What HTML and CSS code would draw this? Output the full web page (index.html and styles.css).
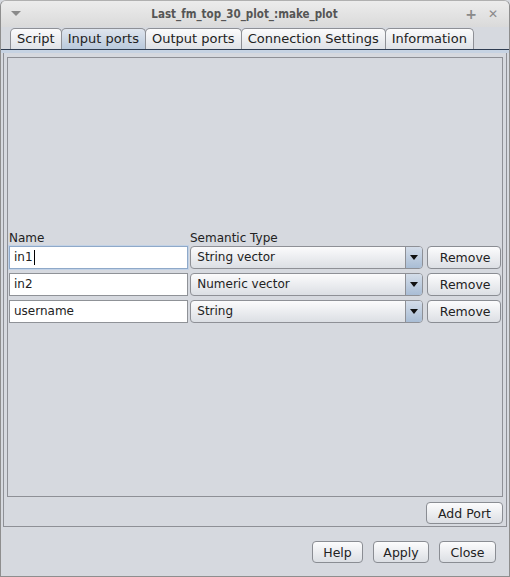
FILE: index.html
```html
<!DOCTYPE html>
<html>
<head>
<meta charset="utf-8">
<link rel="stylesheet" href="styles.css">
</head>
<body>
<div class="window">
  <div class="titlebar">
    <span class="menu-arrow"></span>
    <span class="title">Last_fm_top_30_plot_:make_plot</span>
    <span class="tb-btns"><span class="tb-plus">+</span><span class="tb-close">✕</span></span>
  </div>
  <div class="tabs">
    <div class="tab">Script</div>
    <div class="tab selected">Input ports</div>
    <div class="tab">Output ports</div>
    <div class="tab">Connection Settings</div>
    <div class="tab">Information</div>
  </div>
  <div class="tabline"></div>
  <div class="content">
    <div class="inner">
      <div class="form">
        <div class="labels">
          <span class="lbl-name">Name</span>
          <span class="lbl-type">Semantic Type</span>
        </div>
        <div class="row">
          <div class="field focused">in1<span class="caret"></span></div>
          <div class="combo"><span class="combo-text">String vector</span><span class="combo-arrow"><span class="tri"></span></span></div>
          <div class="btn remove">Remove</div>
        </div>
        <div class="row">
          <div class="field">in2</div>
          <div class="combo"><span class="combo-text">Numeric vector</span><span class="combo-arrow"><span class="tri"></span></span></div>
          <div class="btn remove">Remove</div>
        </div>
        <div class="row">
          <div class="field">username</div>
          <div class="combo"><span class="combo-text">String</span><span class="combo-arrow"><span class="tri"></span></span></div>
          <div class="btn remove">Remove</div>
        </div>
      </div>
    </div>
    <div class="addrow">
      <div class="btn addport">Add Port</div>
    </div>
  </div>
  <div class="footer">
    <div class="btn help">Help</div>
    <div class="btn apply">Apply</div>
    <div class="btn close">Close</div>
  </div>
</div>
</body>
</html>
```
FILE: styles.css
```css
html, body {
  margin: 0;
  padding: 0;
}
body {
  width: 510px;
  height: 577px;
  background: #d6d9df;
  font-family: "DejaVu Sans", sans-serif;
  font-size: 12px;
  color: #222;
  overflow: hidden;
}
.window {
  box-sizing: border-box;
  width: 510px;
  height: 577px;
  border: 1px solid #8e8e8e;
  border-top-color: #b0b0b0;
  border-radius: 6px 6px 0 0;
  display: flex;
  flex-direction: column;
  background: #d6d9df;
}
.titlebar {
  height: 26px;
  flex: none;
  position: relative;
  background: linear-gradient(#ececec, #dadada);
  border-radius: 5px 5px 0 0;
  display: flex;
  align-items: center;
  justify-content: center;
}
.title {
  font-family: "DejaVu Sans Condensed", "DejaVu Sans", sans-serif;
  font-weight: bold;
  color: #555;
  font-size: 11.5px;
  margin-right: 21px;
}
.menu-arrow {
  position: absolute;
  left: 10px;
  top: 10px;
  width: 0;
  height: 0;
  border-left: 5px solid transparent;
  border-right: 5px solid transparent;
  border-top: 5px solid #8a8a8a;
}
.tb-btns {
  position: absolute;
  right: 11px;
  top: 5px;
  display: flex;
  gap: 11px;
  color: #8a8a8a;
  font-weight: bold;
}
.tb-plus { font-size: 14px; line-height: 16px; }
.tb-close { font-size: 12px; line-height: 16px; }
.tabs {
  display: flex;
  height: 21px;
  padding: 1px 0 0 9px;
  flex: none;
}
.tab {
  box-sizing: border-box;
  height: 21px;
  padding: 0 6px 1px 6px;
  border: 1px solid #8e9096;
  border-bottom: none;
  border-radius: 5px 5px 0 0;
  margin-right: -1px;
  background: linear-gradient(#fbfbfc, #dfe2e7);
  display: flex;
  align-items: center;
  font-size: 13px;
  color: #222;
}
.tab.selected {
  background: linear-gradient(#dfe5ee, #b9c9dc);
}
.tabline {
  flex: none;
  height: 3px;
  border-top: 1px solid #2f3d52;
  background: #c6d3e3;
}
.content {
  flex: none;
  box-sizing: border-box;
  height: 474px;
  margin: 0 2px 0 2px;
  border: 1px solid #8e9096;
  border-top: none;
  padding: 4px 3px 0 3px;
  display: flex;
  flex-direction: column;
}
.inner {
  box-sizing: border-box;
  height: 440px;
  border: 1px solid #8e9096;
  display: flex;
  flex-direction: column;
  justify-content: center;
  padding: 0 1px 2px 1px;
}
.form {
  display: flex;
  flex-direction: column;
}
.labels {
  display: flex;
  height: 15px;
  align-items: flex-end;
  margin-bottom: 1px;
}
.lbl-name { width: 181px; }
.row {
  display: flex;
  height: 23px;
  margin-bottom: 4px;
  align-items: stretch;
}
.row:last-child { margin-bottom: 0; }
.field {
  box-sizing: border-box;
  width: 180px;
  background: #fff;
  border: 1px solid #8f9297;
  padding: 0 4px;
  display: flex;
  align-items: center;
  margin-right: 2px;
}
.field.focused {
  border-color: #8fa9c9;
  box-shadow: 0 0 0 1px #c2d2e6;
}
.caret {
  display: inline-block;
  width: 1px;
  height: 15px;
  background: #000;
  margin-left: 1px;
}
.combo {
  box-sizing: border-box;
  width: 234px;
  margin-right: 4px;
  border: 1px solid #8e9096;
  border-radius: 4px;
  background: linear-gradient(#fbfbfc, #dcdfe4);
  display: flex;
  align-items: stretch;
  overflow: hidden;
}
.combo-text {
  flex: 1;
  padding-left: 6px;
  display: flex;
  align-items: center;
}
.combo-arrow {
  width: 16px;
  border-left: 1px solid #8e9096;
  background: linear-gradient(#d4dde9, #a9bdd5);
  display: flex;
  align-items: center;
  justify-content: center;
}
.tri {
  width: 0;
  height: 0;
  border-left: 4px solid transparent;
  border-right: 4px solid transparent;
  border-top: 5px solid #111;
}
.btn {
  box-sizing: border-box;
  border: 1px solid #8a8d93;
  border-radius: 4px;
  background: linear-gradient(#fcfcfd, #dcdfe4);
  display: flex;
  align-items: center;
  justify-content: center;
  color: #222;
  font-size: 12.5px;
}
.remove { width: 74px; padding-left: 2px; }
.addrow {
  flex: 1;
  display: flex;
  justify-content: flex-end;
  align-items: flex-start;
  padding-top: 5px;
}
.addport { width: 77px; height: 22px; }
.footer {
  flex: 1;
  display: flex;
  justify-content: flex-end;
  align-items: flex-start;
  padding: 14px 13px 0 0;
  gap: 10px;
}
.help { width: 51px; height: 22px; }
.apply { width: 56px; height: 22px; }
.close { width: 57px; height: 22px; }
```
